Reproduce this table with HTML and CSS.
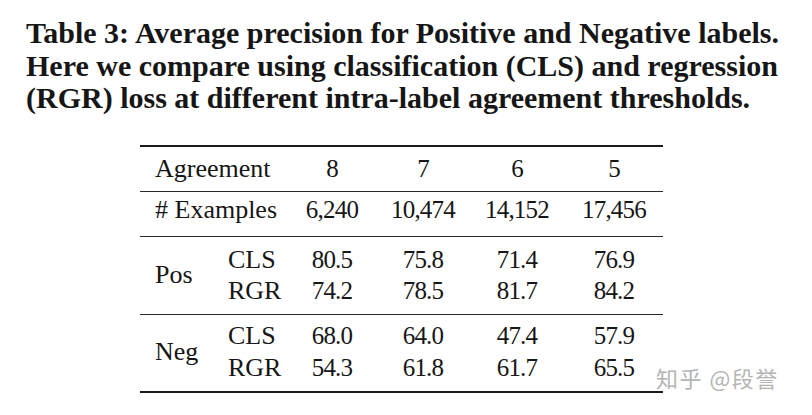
FILE: index.html
```html
<!DOCTYPE html>
<html>
<head>
<meta charset="utf-8">
<link rel="stylesheet" href="styles.css">
</head>
<body>
<div class="page">
  <div class="caption">
    <span class="line">Table 3: Average precision for Positive and Negative labels.</span>
    <span class="line">Here we compare using classification (CLS) and regression</span>
    <span class="line">(RGR) loss at different intra-label agreement thresholds.</span>
  </div>
  <div class="table">
    <div class="row head">
      <div class="lab">Agreement</div>
      <div class="num">8</div>
      <div class="num">7</div>
      <div class="num">6</div>
      <div class="num">5</div>
    </div>
    <div class="row ex">
      <div class="lab"># Examples</div>
      <div class="num">6,240</div>
      <div class="num">10,474</div>
      <div class="num">14,152</div>
      <div class="num">17,456</div>
    </div>
    <div class="group pos">
      <div class="grp">Pos</div>
      <div class="sub">CLS</div>
      <div class="num">80.5</div>
      <div class="num">75.8</div>
      <div class="num">71.4</div>
      <div class="num">76.9</div>
      <div class="sub">RGR</div>
      <div class="num">74.2</div>
      <div class="num">78.5</div>
      <div class="num">81.7</div>
      <div class="num">84.2</div>
    </div>
    <div class="group neg">
      <div class="grp">Neg</div>
      <div class="sub">CLS</div>
      <div class="num">68.0</div>
      <div class="num">64.0</div>
      <div class="num">47.4</div>
      <div class="num">57.9</div>
      <div class="sub">RGR</div>
      <div class="num">54.3</div>
      <div class="num">61.8</div>
      <div class="num">61.7</div>
      <div class="num">65.5</div>
    </div>
  </div>
  <div class="watermark">知乎 @段誉</div>
</div>
</body>
</html>
```
FILE: styles.css
```css
html, body {
  margin: 0;
  padding: 0;
  background: #ffffff;
}
.page {
  position: relative;
  width: 812px;
  height: 415px;
  overflow: hidden;
  font-family: "Liberation Serif", "Times New Roman", serif;
  color: #161616;
}
.caption {
  padding: 17px 0 0 26px;
  font-weight: bold;
  font-size: 30px;
  line-height: 32.5px;
  white-space: nowrap;
}
.caption .line {
  display: block;
}
.table {
  margin: 30px 0 0 140px;
  width: 523px;
  border-top: 2px solid #1a1a1a;
  border-bottom: 2px solid #1a1a1a;
  font-size: 25px;
}
.row {
  display: grid;
  grid-template-columns: 147px 90px 92px 96px 98px;
  border-bottom: 1px solid #2a2a2a;
}
.row.head {
  line-height: 44px;
}
.row.ex {
  line-height: 36px;
  padding-bottom: 8px;
}
.lab {
  padding-left: 15px;
  font-size: 26px;
}
.num {
  text-align: center;
  letter-spacing: -0.8px;
}
.group {
  display: grid;
  grid-template-columns: 75px 72px 90px 92px 96px 98px;
}
.group.pos {
  line-height: 31px;
  padding: 7px 0 8px;
  border-bottom: 1px solid #2a2a2a;
}
.group.neg {
  line-height: 32px;
  padding: 5px 0 7px;
}
.grp {
  grid-row: 1 / span 2;
  align-self: center;
  padding-left: 15px;
  font-size: 26px;
}
.sub {
  padding-left: 13px;
  font-size: 26px;
}
.watermark {
  position: absolute;
  left: 656px;
  top: 365px;
  font-family: "Noto Sans CJK SC", "Noto Sans", sans-serif;
  font-size: 22px;
  line-height: 24px;
  letter-spacing: 1.5px;
  color: #b4b4b4;
  text-shadow: 0 0 2px #ffffff;
  white-space: nowrap;
}
```
